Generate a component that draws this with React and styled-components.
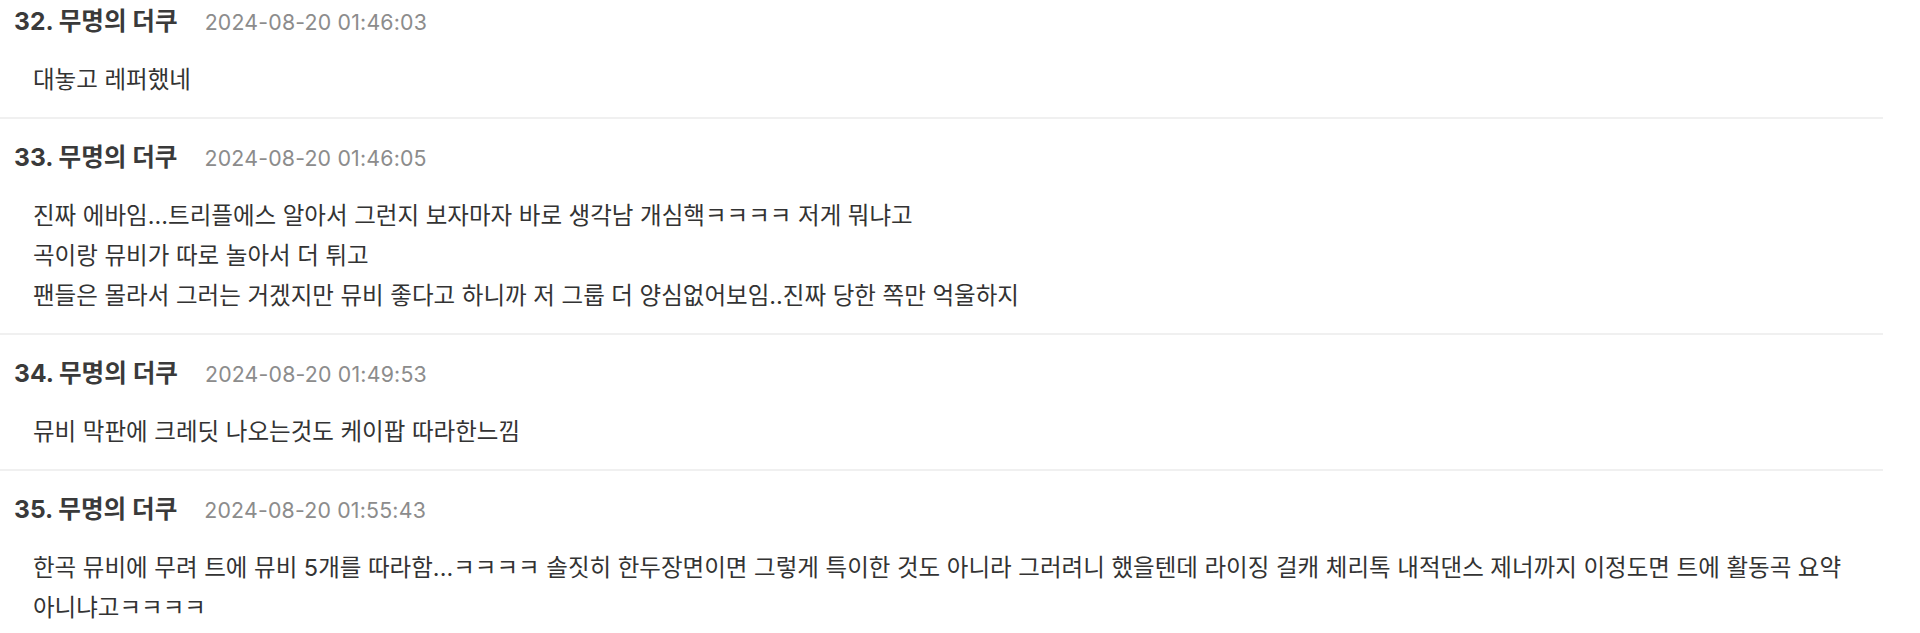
import React from "react";
import styled, { createGlobalStyle } from "styled-components";

const GlobalStyle = createGlobalStyle`
  html, body {
    margin: 0;
    padding: 0;
    background: #ffffff;
  }
  body {
    font-family: Inter, "Noto Sans CJK KR", "Noto Sans", sans-serif;
    color: #333333;
    -webkit-font-smoothing: antialiased;
  }
`;

const List = styled.ul`
  list-style: none;
  margin: 0;
  padding: 0;
  width: 1883px;
`;

const Comment = styled.li`
  padding: 18px 0 17px;
  border-bottom: 2px solid #f0f0f0;

  &:first-child {
    padding-top: 1px;
  }

  &:last-child {
    border-bottom: none;
  }
`;

const Header = styled.div`
  display: flex;
  align-items: baseline;
  gap: 27px;
  padding-left: 14px;
  height: 40px;
  line-height: 40px;
  white-space: nowrap;
`;

const Author = styled.span`
  font-size: 24.6px;
  font-weight: 700;
  color: #3a3a3a;
`;

const DateText = styled.span`
  font-size: 21.3px;
  font-weight: 400;
  color: #8c8c8c;
  letter-spacing: 0.2px;
`;

const Body = styled.div`
  margin-top: 19px;
  padding: 0 24px 0 33px;
  font-size: 23.5px;
  line-height: 40px;
  color: #333333;
  word-break: keep-all;
`;

const Line = styled.p`
  margin: 0;
`;

const comments = [
  {
    no: 32,
    date: "2024-08-20 01:46:03",
    lines: ["대놓고 레퍼했네"],
  },
  {
    no: 33,
    date: "2024-08-20 01:46:05",
    lines: [
      "진짜 에바임...트리플에스 알아서 그런지 보자마자 바로 생각남 개심핵ㅋㅋㅋㅋ 저게 뭐냐고",
      "곡이랑 뮤비가 따로 놀아서 더 튀고",
      "팬들은 몰라서 그러는 거겠지만 뮤비 좋다고 하니까 저 그룹 더 양심없어보임..진짜 당한 쪽만 억울하지",
    ],
  },
  {
    no: 34,
    date: "2024-08-20 01:49:53",
    lines: ["뮤비 막판에 크레딧 나오는것도 케이팝 따라한느낌"],
  },
  {
    no: 35,
    date: "2024-08-20 01:55:43",
    lines: [
      "한곡 뮤비에 무려 트에 뮤비 5개를 따라함...ㅋㅋㅋㅋ 솔짓히 한두장면이면 그렇게 특이한 것도 아니라 그러려니 했을텐데 라이징 걸캐 체리톡 내적댄스 제너까지 이정도면 트에 활동곡 요약 아니냐고ㅋㅋㅋㅋ",
    ],
  },
];

export default function App() {
  return (
    <>
      <GlobalStyle />
      <List>
        {comments.map((c) => (
          <Comment key={c.no}>
            <Header>
              <Author>{c.no}. 무명의 더쿠</Author>
              <DateText>{c.date}</DateText>
            </Header>
            <Body>
              {c.lines.map((l, i) => (
                <Line key={i}>{l}</Line>
              ))}
            </Body>
          </Comment>
        ))}
      </List>
    </>
  );
}
